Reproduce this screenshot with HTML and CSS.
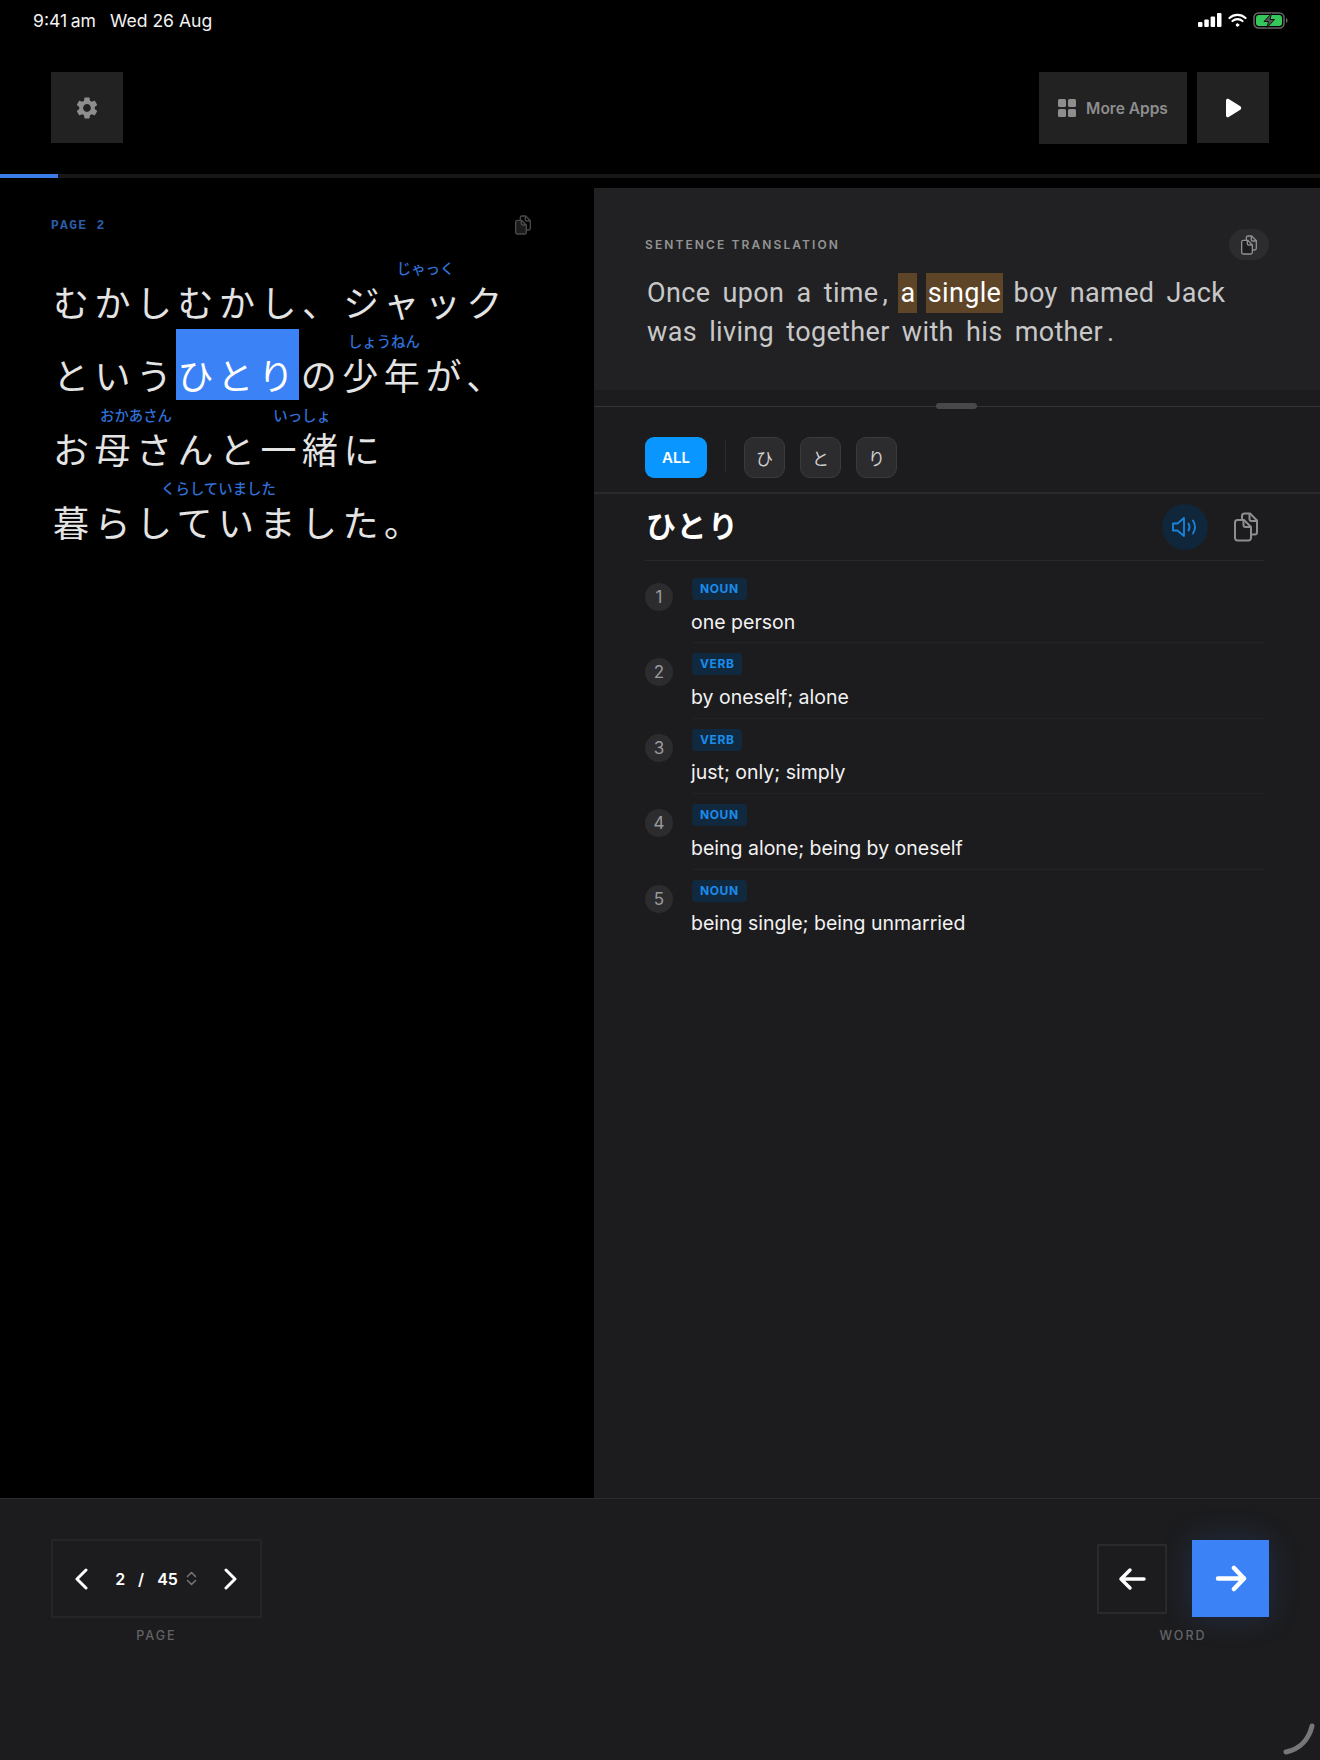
FILE: index.html
```html
<!DOCTYPE html>
<html lang="ja">
<head>
    <meta charset="UTF-8">
    <meta name="viewport" content="width=device-width, initial-scale=1.0">
    <title>Reader</title>
    <link rel="stylesheet" href="styles.css">
</head>
<body>
    <svg class="sprites" width="0" height="0">
        <symbol id="copy" viewBox="0 0 24 30">
            <path d="M8 8V4a2.500 2.500 0 0 1 2.500-2.500H16L23 8.500V20a2.500 2.500 0 0 1-2.500 2.500H17" fill="none" stroke="currentColor" stroke-width="2" stroke-linejoin="round"/>
            <path d="M15.500 2v5a2 2 0 0 0 2 2H23" fill="none" stroke="currentColor" stroke-width="2" stroke-linejoin="round"/>
            <path d="M3.500 8H10l7 7v11a2.500 2.500 0 0 1-2.500 2.500h-11A2.500 2.500 0 0 1 1 26V10.500A2.500 2.500 0 0 1 3.500 8z" fill="#1c1c1e" stroke="currentColor" stroke-width="2" stroke-linejoin="round"/>
            <path d="M9.500 8.500V13a2 2 0 0 0 2 2H17" fill="none" stroke="currentColor" stroke-width="2" stroke-linejoin="round"/>
        </symbol>
    </svg>

    <div class="app">
        <div class="status-bar">
            <div class="status-time"><span>9:41<span class="am">am</span></span><span>Wed 26 Aug</span></div>
            <div class="status-icons">
                <svg width="24" height="14" viewBox="0 0 24 14" fill="#fff">
                    <rect x="0" y="9" width="4.500" height="5" rx="1"/>
                    <rect x="6.300" y="6.500" width="4.500" height="7.500" rx="1"/>
                    <rect x="12.600" y="3.500" width="4.500" height="10.500" rx="1"/>
                    <rect x="19" y="0" width="4.500" height="14" rx="1"/>
                </svg>
                <svg width="19" height="14" viewBox="0 0 19 14" fill="none" stroke="#fff" stroke-width="2.200" stroke-linecap="round">
                    <path d="M1.500 5C6 .8 13 .8 17.500 5"/>
                    <path d="M4.500 8c2.800-2.500 7.200-2.500 10 0"/>
                    <circle cx="9.500" cy="12" r="1.300" fill="#fff" stroke-width="1"/>
                </svg>
                <svg width="35" height="17" viewBox="0 0 35 17">
                    <rect x="1" y="1" width="30" height="15" rx="4.500" fill="none" stroke="#666" stroke-width="1.500"/>
                    <rect x="3" y="3" width="26" height="11" rx="3" fill="#34c759"/>
                    <path d="M33 6v5c1-.4 1.600-1.400 1.600-2.500S34 6.400 33 6z" fill="#666"/>
                    <path d="M18.500 1.500L11 9.500h4.500l-1.500 6 7.500-8h-4.500z" fill="#555" stroke="#111" stroke-width="1"/>
                </svg>
            </div>
        </div>

        <div class="top-bar">
            <button class="tool-btn">
                <svg width="26" height="26" viewBox="0 0 24 24" fill="#8e8e8e">
                    <path d="M19.140 12.940c.04-.3.06-.61.06-.94 0-.32-.02-.64-.07-.94l2.030-1.580c.18-.14.23-.41.12-.61l-1.920-3.320c-.12-.22-.37-.29-.59-.22l-2.390.96c-.5-.38-1.030-.7-1.620-.94l-.36-2.540c-.04-.24-.24-.41-.48-.41h-3.840c-.24 0-.43.17-.47.41l-.36 2.540c-.59.24-1.130.57-1.620.94l-2.390-.96c-.22-.08-.47 0-.59.22L2.740 8.870c-.12.21-.08.47.12.61l2.030 1.580c-.05.3-.09.63-.09.94s.02.64.07.94l-2.030 1.580c-.18.14-.23.41-.12.61l1.920 3.320c.12.22.37.29.59.22l2.390-.96c.5.38 1.030.7 1.620.94l.36 2.540c.05.24.24.41.48.41h3.840c.24 0 .44-.17.47-.41l.36-2.540c.59-.24 1.130-.56 1.620-.94l2.390.96c.22.08.47 0 .59-.22l1.920-3.320c.12-.22.07-.47-.12-.61l-2.010-1.580zM12 15.600c-1.980 0-3.600-1.620-3.600-3.600s1.620-3.600 3.600-3.600 3.600 1.620 3.600 3.600-1.620 3.600-3.600 3.600z"/>
                </svg>
            </button>
            <div class="top-actions">
                <button class="more-apps">
                    <svg width="18" height="18" viewBox="0 0 18 18" fill="#8e8e8e">
                        <rect x="0" y="0" width="8" height="8" rx="1.500"/>
                        <rect x="10" y="0" width="8" height="8" rx="1.500"/>
                        <rect x="0" y="10" width="8" height="8" rx="1.500"/>
                        <rect x="10" y="10" width="8" height="8" rx="1.500"/>
                    </svg>
                    More Apps
                </button>
                <button class="tool-btn">
                    <svg width="17" height="20" viewBox="0 0 17 20" fill="#fff">
                        <path d="M1 2.500C1 1 2.500.3 3.700 1l11.600 7.300c1.200.8 1.200 2.600 0 3.400L3.700 19C2.500 19.700 1 19 1 17.500z"/>
                    </svg>
                </button>
            </div>
        </div>

        <div class="progress"><div class="progress-fill" style="width: 58px"></div></div>

        <div class="main">
            <div class="story">
                <div class="story-head">
                    <span class="page-tag">PAGE 2</span>
                    <svg class="story-copy" width="16" height="20"><use href="#copy"/></svg>
                </div>
                <div class="story-text">
                    <div class="line">むかしむかし、<ruby>ジャック<rt>じゃっく</rt></ruby></div>
                    <div class="line">という<span class="selected">ひとり</span>の<ruby>少年<rt>しょうねん</rt></ruby>が、</div>
                    <div class="line"><ruby>お母さん<rt>おかあさん</rt></ruby>と<ruby>一緒<rt>いっしょ</rt></ruby>に</div>
                    <div class="line"><ruby>暮らしていました<rt>くらしていました</rt></ruby>。</div>
                </div>
            </div>

            <div class="detail">
                <div class="translation">
                    <div class="translation-head">
                        <span class="translation-label">SENTENCE TRANSLATION</span>
                        <span class="copy-pill"><svg width="16" height="20"><use href="#copy"/></svg></span>
                    </div>
                    <p class="translation-text">Once upon a time<span class="punct">,</span> <mark>a</mark> <mark>single</mark> boy named Jack was living together with his mother<span class="punct">.</span></p>
                </div>
                <div class="splitter"><span class="handle"></span></div>

                <div class="tabs">
                    <button class="tab-all">ALL</button>
                    <span class="tab-divider"></span>
                    <button class="tab-char">ひ</button>
                    <button class="tab-char">と</button>
                    <button class="tab-char">り</button>
                </div>

                <div class="word-head">
                    <h2 class="word">ひとり</h2>
                    <div class="word-actions">
                        <span class="speaker">
                            <svg width="26" height="22" viewBox="0 0 26 22" fill="none" stroke="#1a84dd" stroke-width="1.800" stroke-linejoin="round" stroke-linecap="round">
                                <path d="M1 7.500v7h4.500L12 20V2L5.500 7.500z"/>
                                <path d="M16.500 7.500c1.300 2.200 1.300 4.800 0 7"/>
                                <path d="M21 4.500c2.500 4 2.500 9 0 13"/>
                            </svg>
                        </span>
                        <svg class="word-copy" width="24" height="30"><use href="#copy"/></svg>
                    </div>
                </div>

                <div class="defs">
                    <div class="def">
                        <span class="def-num">1</span>
                        <div class="def-body"><span class="badge">NOUN</span><div class="def-text">one person</div></div>
                    </div>
                    <div class="def">
                        <span class="def-num">2</span>
                        <div class="def-body"><span class="badge">VERB</span><div class="def-text">by oneself; alone</div></div>
                    </div>
                    <div class="def">
                        <span class="def-num">3</span>
                        <div class="def-body"><span class="badge">VERB</span><div class="def-text">just; only; simply</div></div>
                    </div>
                    <div class="def">
                        <span class="def-num">4</span>
                        <div class="def-body"><span class="badge">NOUN</span><div class="def-text">being alone; being by oneself</div></div>
                    </div>
                    <div class="def">
                        <span class="def-num">5</span>
                        <div class="def-body"><span class="badge">NOUN</span><div class="def-text">being single; being unmarried</div></div>
                    </div>
                </div>
            </div>
        </div>

        <div class="bottom-bar">
            <div class="nav-group">
                <div class="pager">
                    <svg width="14" height="22" viewBox="0 0 14 22" fill="none" stroke="#fff" stroke-width="3" stroke-linecap="round" stroke-linejoin="round"><path d="M12 2L3 11l9 9"/></svg>
                    <div class="pager-count">
                        <span>2</span><span class="slash">/</span><span>45</span>
                        <svg width="11" height="15" viewBox="0 0 11 15" fill="none" stroke="#777" stroke-width="1.500" stroke-linecap="round" stroke-linejoin="round"><path d="M1.500 5.500l4-4 4 4M1.500 9.500l4 4 4-4"/></svg>
                    </div>
                    <svg width="14" height="22" viewBox="0 0 14 22" fill="none" stroke="#fff" stroke-width="3" stroke-linecap="round" stroke-linejoin="round"><path d="M2 2l9 9-9 9"/></svg>
                </div>
                <div class="nav-label">PAGE</div>
            </div>
            <div class="nav-group">
                <div class="word-nav">
                    <button class="word-prev">
                        <svg width="28" height="24" viewBox="0 0 28 24" fill="none" stroke="#fff" stroke-width="3.500" stroke-linecap="round" stroke-linejoin="round"><path d="M26 12H3M12 3l-9 9 9 9"/></svg>
                    </button>
                    <button class="word-next">
                        <svg width="32" height="27" viewBox="0 0 32 27" fill="none" stroke="#fff" stroke-width="4.500" stroke-linecap="round" stroke-linejoin="round"><path d="M3 13.500h26M19 3l10 10.500L19 24"/></svg>
                    </button>
                </div>
                <div class="nav-label">WORD</div>
            </div>
            <svg class="corner" width="32" height="32" viewBox="0 0 32 32" fill="none" stroke="#777" stroke-width="5" stroke-linecap="round"><path d="M29 3C26 16 17 26 3 29"/></svg>
        </div>
    </div>
</body>
</html>
```

FILE: styles.css
```css
* {
    box-sizing: border-box;
}

body {
    margin: 0;
    background-color: #000;
    font-family: Inter, "Noto Sans CJK JP", sans-serif;
    color: #fff;
}

button {
    font-family: inherit;
    border: none;
    padding: 0;
}

.sprites {
    display: block;
}

.app {
    width: 1320px;
    height: 1760px;
    display: flex;
    flex-direction: column;
    overflow: hidden;
}

/* status bar */
.status-bar {
    height: 40px;
    padding: 0 32px 0 33px;
    display: flex;
    justify-content: space-between;
    align-items: center;
}

.status-time {
    display: flex;
    gap: 14px;
    font-size: 17.600px;
    color: #f2f2f2;
}

.am {
    margin-left: 3.500px;
}

.status-icons {
    display: flex;
    align-items: center;
    gap: 6px;
}

/* top bar */
.top-bar {
    height: 134px;
    padding: 32px 51px 31px;
    display: flex;
    justify-content: space-between;
}

.top-actions {
    display: flex;
    gap: 10px;
}

.tool-btn {
    width: 72px;
    height: 71px;
    background-color: #222;
    display: flex;
    align-items: center;
    justify-content: center;
}

.more-apps {
    width: 148px;
    height: 72px;
    background-color: #222;
    color: #8e8e8e;
    display: flex;
    align-items: center;
    justify-content: center;
    gap: 10px;
    font-size: 15.500px;
    font-weight: 600;
}

.progress {
    height: 4px;
    background-color: #171717;
}

.progress-fill {
    height: 100%;
    background-color: #3b7ee8;
}

.main {
    margin-top: 10px;
    flex: 1;
    display: flex;
}

/* story column */
.story {
    width: 594px;
    padding: 27px 63px 0 53px;
}

.story-head {
    display: flex;
    justify-content: space-between;
    align-items: center;
}

.page-tag {
    margin-left: -2px;
    font-family: "Liberation Mono", monospace;
    font-size: 13px;
    font-weight: bold;
    letter-spacing: 1.300px;
    color: #2c5ca8;
}

.story-copy {
    color: #4a4a4a;
}

.story-text {
    margin-top: 21.500px;
    font-family: "Noto Sans CJK JP", sans-serif;
    font-size: 36px;
    font-weight: 400;
    letter-spacing: 5.500px;
    color: #e4e4e4;
}

.line {
    height: 73.500px;
    line-height: 73.500px;
    white-space: nowrap;
}

.line ruby {
    ruby-align: center;
}

.line rt {
    padding-bottom: 7px;
    font-size: 14.400px;
    font-weight: 500;
    letter-spacing: 0;
    line-height: 14px;
    color: #3070d8;
}

.selected {
    margin: 0 2px 0 -2px;
    padding: 19px 0 0 2px;
    letter-spacing: 4.800px;
    background-color: #3b82f6;
    color: #fff;
}

/* detail column */
.detail {
    flex: 1;
    background-color: #1c1c1e;
}

.translation {
    height: 202px;
    padding: 41px 51px 0;
    background-color: #212123;
}

.translation-head {
    display: flex;
    justify-content: space-between;
    align-items: center;
}

.translation-label {
    font-size: 12px;
    font-weight: 600;
    letter-spacing: 2.100px;
    color: #949494;
}

.copy-pill {
    width: 40px;
    height: 31px;
    border-radius: 16px;
    background-color: #2c2c2e;
    color: #8e8e8e;
    display: flex;
    align-items: center;
    justify-content: center;
}

.translation-text {
    margin: 14px 0 0 2px;
    width: 620px;
    font-family: Roboto, sans-serif;
    font-size: 27px;
    line-height: 39px;
    letter-spacing: 0.340px;
    word-spacing: 5.200px;
    color: #c8c8c8;
}

.translation-text mark {
    padding: 4px 0;
    background-color: #5e4527;
    box-shadow: 2px 0 0 #5e4527, -2px 0 0 #5e4527;
    color: #fff;
}

.punct {
    margin-left: 4px;
}

.splitter {
    height: 17px;
    border-bottom: 1px solid #343436;
    position: relative;
}

.handle {
    position: absolute;
    left: 342px;
    bottom: -3px;
    width: 41px;
    height: 6px;
    border-radius: 3px;
    background-color: #48484a;
}

.tabs {
    height: 87px;
    padding: 30px 51px 0;
    border-bottom: 2px solid #2a2a2c;
    display: flex;
    gap: 15px;
}

.tab-all {
    width: 62px;
    height: 41px;
    margin-right: 3px;
    border-radius: 9px;
    background-color: #0a96ff;
    color: #fff;
    font-size: 15px;
    font-weight: 600;
}

.tab-divider {
    width: 1px;
    height: 32px;
    margin: 4px 3px 0 0;
    background-color: #2c2c2e;
}

.tab-char {
    width: 41px;
    height: 41px;
    border: 1px solid #3a3a3c;
    border-radius: 10px;
    background-color: #2c2c2e;
    color: #d0d0d0;
    font-size: 17px;
    font-family: "Noto Sans CJK JP", sans-serif;
}

.word-head {
    height: 67px;
    margin: 0 55px 0 51px;
    border-bottom: 1px solid #28282a;
    display: flex;
    justify-content: space-between;
    align-items: center;
}

.word {
    margin: 0 0 6px 1px;
    font-family: "Noto Sans CJK JP", sans-serif;
    font-size: 30px;
    font-weight: 700;
    letter-spacing: 1.500px;
}

.word-actions {
    display: flex;
    align-items: center;
    gap: 26px;
    margin-right: 7px;
}

.speaker {
    width: 46px;
    height: 46px;
    border-radius: 50%;
    background-color: #10263a;
    display: flex;
    align-items: center;
    justify-content: center;
}

.word-copy {
    color: #8e8e8e;
}

.defs {
    padding: 7px 55px 0 51px;
}

.def {
    height: 75.400px;
    display: flex;
    gap: 19px;
}

.def-num {
    width: 28px;
    height: 28px;
    margin-top: 15px;
    border-radius: 50%;
    background-color: #2c2c2e;
    color: #9a9a9e;
    font-size: 17px;
    display: flex;
    align-items: center;
    justify-content: center;
}

.def-body {
    flex: 1;
    padding-top: 10px;
    border-bottom: 1px solid #232325;
}

.def:last-child .def-body {
    border-bottom: none;
}

.badge {
    display: inline-block;
    height: 22px;
    padding: 0 8px;
    border-radius: 4px;
    background-color: #11293f;
    color: #1a8cec;
    font-size: 12px;
    font-weight: 700;
    line-height: 22px;
    letter-spacing: 0.600px;
    vertical-align: top;
}

.def-text {
    margin-top: 8.500px;
    margin-left: -1px;
    font-size: 19.500px;
    line-height: 26px;
    color: #f2f2f2;
}

/* bottom bar */
.bottom-bar {
    height: 262px;
    padding: 40px 51px 0;
    border-top: 1px solid #2c2c2e;
    background-color: #1c1c1e;
    display: flex;
    justify-content: space-between;
    position: relative;
}

.pager {
    width: 211px;
    height: 79px;
    padding: 0 22px 0 21px;
    border: 2px solid #252527;
    display: flex;
    align-items: center;
    justify-content: space-between;
}

.pager-count {
    display: flex;
    align-items: center;
    gap: 8px;
    font-size: 16px;
    font-weight: 600;
}

.slash {
    margin: 0 5px;
}

.word-nav {
    height: 79px;
    display: flex;
    align-items: center;
    gap: 25px;
}

.word-prev {
    width: 70px;
    height: 70px;
    border: 2px solid #2a2a2c;
    background-color: transparent;
    display: flex;
    align-items: center;
    justify-content: center;
}

.word-next {
    width: 77px;
    height: 77px;
    background-color: #3b82f6;
    box-shadow: 0 0 32px rgba(59, 130, 246, 0.18);
    display: flex;
    align-items: center;
    justify-content: center;
}

.nav-label {
    margin-top: 10px;
    text-align: center;
    font-size: 12.500px;
    font-weight: 500;
    letter-spacing: 2px;
    color: #636366;
}

.corner {
    position: absolute;
    right: 5px;
    bottom: 5px;
}
```
